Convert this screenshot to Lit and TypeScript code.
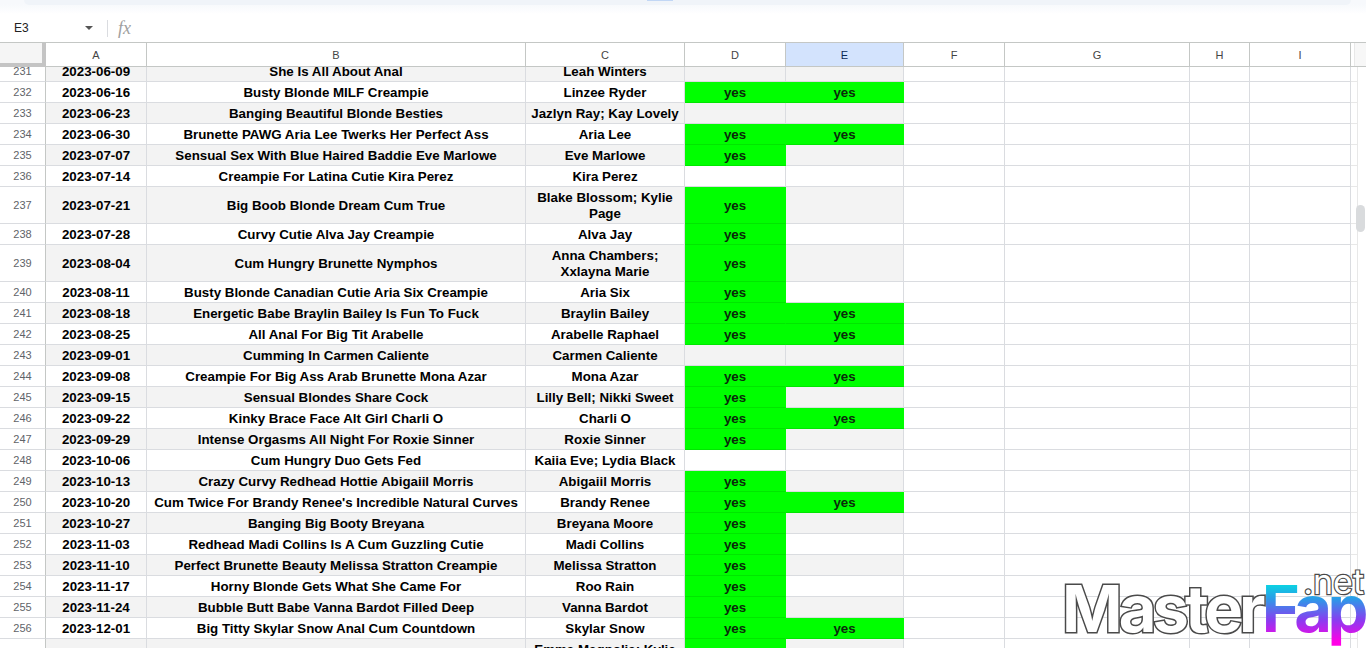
import { LitElement, html, css, nothing } from "lit";
import { customElement } from "lit/decorators.js";

type Row = { n: number; h?: number; a: string; b: string; c: string; d?: boolean; e?: boolean };
const rows: Row[] = [
  { n: 231, a: "2023-06-09", b: "She Is All About Anal", c: "Leah Winters" },
  { n: 232, a: "2023-06-16", b: "Busty Blonde MILF Creampie", c: "Linzee Ryder", d: true, e: true },
  { n: 233, a: "2023-06-23", b: "Banging Beautiful Blonde Besties", c: "Jazlyn Ray; Kay Lovely" },
  { n: 234, a: "2023-06-30", b: "Brunette PAWG Aria Lee Twerks Her Perfect Ass", c: "Aria Lee", d: true, e: true },
  { n: 235, a: "2023-07-07", b: "Sensual Sex With Blue Haired Baddie Eve Marlowe", c: "Eve Marlowe", d: true },
  { n: 236, a: "2023-07-14", b: "Creampie For Latina Cutie Kira Perez", c: "Kira Perez" },
  { n: 237, h: 37, a: "2023-07-21", b: "Big Boob Blonde Dream Cum True", c: "Blake Blossom; Kylie Page", d: true },
  { n: 238, a: "2023-07-28", b: "Curvy Cutie Alva Jay Creampie", c: "Alva Jay", d: true },
  { n: 239, h: 37, a: "2023-08-04", b: "Cum Hungry Brunette Nymphos", c: "Anna Chambers; Xxlayna Marie", d: true },
  { n: 240, a: "2023-08-11", b: "Busty Blonde Canadian Cutie Aria Six Creampie", c: "Aria Six", d: true },
  { n: 241, a: "2023-08-18", b: "Energetic Babe Braylin Bailey Is Fun To Fuck", c: "Braylin Bailey", d: true, e: true },
  { n: 242, a: "2023-08-25", b: "All Anal For Big Tit Arabelle", c: "Arabelle Raphael", d: true, e: true },
  { n: 243, a: "2023-09-01", b: "Cumming In Carmen Caliente", c: "Carmen Caliente" },
  { n: 244, a: "2023-09-08", b: "Creampie For Big Ass Arab Brunette Mona Azar", c: "Mona Azar", d: true, e: true },
  { n: 245, a: "2023-09-15", b: "Sensual Blondes Share Cock", c: "Lilly Bell; Nikki Sweet", d: true },
  { n: 246, a: "2023-09-22", b: "Kinky Brace Face Alt Girl Charli O", c: "Charli O", d: true, e: true },
  { n: 247, a: "2023-09-29", b: "Intense Orgasms All Night For Roxie Sinner", c: "Roxie Sinner", d: true },
  { n: 248, a: "2023-10-06", b: "Cum Hungry Duo Gets Fed", c: "Kaiia Eve; Lydia Black" },
  { n: 249, a: "2023-10-13", b: "Crazy Curvy Redhead Hottie Abigaiil Morris", c: "Abigaiil Morris", d: true },
  { n: 250, a: "2023-10-20", b: "Cum Twice For Brandy Renee's Incredible Natural Curves", c: "Brandy Renee", d: true, e: true },
  { n: 251, a: "2023-10-27", b: "Banging Big Booty Breyana", c: "Breyana Moore", d: true },
  { n: 252, a: "2023-11-03", b: "Redhead Madi Collins Is A Cum Guzzling Cutie", c: "Madi Collins", d: true },
  { n: 253, a: "2023-11-10", b: "Perfect Brunette Beauty Melissa Stratton Creampie", c: "Melissa Stratton", d: true },
  { n: 254, a: "2023-11-17", b: "Horny Blonde Gets What She Came For", c: "Roo Rain", d: true },
  { n: 255, a: "2023-11-24", b: "Bubble Butt Babe Vanna Bardot Filled Deep", c: "Vanna Bardot", d: true },
  { n: 256, a: "2023-12-01", b: "Big Titty Skylar Snow Anal Cum Countdown", c: "Skylar Snow", d: true, e: true },
  { n: 257, h: 37, a: "", b: "", c: "Emma Magnolia; Kylie Page", d: true },
];
const cols = ["A", "B", "C", "D", "E", "F", "G", "H", "I"];

@customElement("app-root")
export class AppRoot extends LitElement {
  static styles = css`
    :host {
      display: block;
      position: relative;
      width: 1366px;
      height: 648px;
      overflow: hidden;
      background: #fff;
      font-family: "Liberation Sans", Arial, sans-serif;
      color: #000;
    }
    .top { height: 14px; background: linear-gradient(180deg, #f7f9fc 30%, #fbfcfe 70%, #ffffff 100%); }
    .pill { height: 5px; margin: 0 15px 0 24px; background: #f0f4f9; border-radius: 0 0 8px 8px; display: flex; }
    .pill i { display: block; width: 26px; height: 1px; margin-left: 623px; background: #c2d7f5; }
    .fbar { height: 28px; display: flex; align-items: center; background: #fff; }
    .ref { width: 85px; padding-left: 14px; box-sizing: border-box; font-size: 12px; color: #222; }
    .caret { width: 0; height: 0; border-left: 4px solid transparent; border-right: 4px solid transparent; border-top: 4px solid #555; margin-right: 14px; }
    .sep { width: 1px; height: 17px; background: #dadce0; margin-right: 10px; }
    .fx { font-family: "Liberation Serif", serif; font-style: italic; font-size: 18px; color: #a0a0a0; }
    .grid-row { display: grid; grid-template-columns: 46px 101px 379px 159px 101px 118px 101px 185px 60px 101px 4px 11px; }
    .head { height: 25px; box-sizing: border-box; border-top: 1px solid #c4c7c5; border-bottom: 1px solid #c4c7c5; background: #fff; position: relative; z-index: 2; }
    .head > div { display: flex; align-items: center; justify-content: center; font-size: 11px; color: #444; border-right: 1px solid #c4c7c5; }
    .head .corner { background: #f5f5f5; border-right: 4px solid #c4c4c4; border-bottom: 4px solid #c4c4c4; margin-bottom: -1px; }
    .head .sel { background: #d3e3fd; color: #0b2a55; }
    .head .gap { border-right: 1px solid #e8e8e8; }
    .head .last { border-right: none; background: #f7f7f7; }
    .body { height: 582px; overflow: hidden; position: relative; }
    .rows { margin-top: -6px; }
    .r > div {
      box-sizing: border-box;
      display: flex;
      align-items: center;
      justify-content: center;
      text-align: center;
      border-right: 1px solid #dadce0;
      border-bottom: 1px solid #dadce0;
      font-size: 13.33px;
      line-height: 16px;
      font-weight: 700;
      padding: 2px 3px 0;
      min-width: 0;
    }
    .r > .num { font-weight: 400; font-size: 11px; color: #5f6368; background: #fff; padding: 0; border-right-color: #c4c7c5; }
    .r.alt > .shade { background: #f3f3f3; }
    .r > .yes { background: #00ff00; border-color: #00ff00; border-bottom-color: #00e600; color: #0a2a0a; }
    .r > .gap { border-right-color: #e8e8e8; border-bottom-color: #e8e8e8; }
    .r > .end { border: none; }
    .scroll { position: absolute; right: 1px; width: 9px; height: 27px; top: 138px; border-radius: 5px; background: #d9dbdd; z-index: 3; }
    .mark {
      position: absolute;
      left: 1062px;
      top: 565px;
      width: 310px;
      height: 83px;
      z-index: 4;
      font-family: Inter, "Liberation Sans", sans-serif;
      font-weight: 700;
      white-space: nowrap;
      pointer-events: none;
    }
    .word { position: absolute; left: 0; top: 5px; font-size: 65px; line-height: 78px; letter-spacing: -3.9px; }
    .word .m { color: #fff; -webkit-text-stroke: 3px #4a4a4a; paint-order: stroke fill; }
    .word .f {
      letter-spacing: -4.5px;
      padding-right: 6px;
      background: linear-gradient(180deg, #00e6e0 14%, #2c9ae8 38%, #8a3cf0 65%, #ff00e6 92%);
      -webkit-background-clip: text;
      background-clip: text;
      color: transparent;
    }
    .net { position: absolute; right: 8px; top: -3px; font-size: 34px; line-height: 40px; font-weight: 400; color: #fff; -webkit-text-stroke: 2.4px #4a4a4a; paint-order: stroke fill; }
  `;

  render() {
    return html`
      <div class="top"><div class="pill"><i></i></div></div>
      <div class="fbar">
        <div class="ref">E3</div>
        <div class="caret"></div>
        <div class="sep"></div>
        <div class="fx">fx</div>
      </div>
      <div class="grid-row head">
        <div class="corner"></div>
        ${cols.map((c) => html`<div class=${c === "E" ? "sel" : ""}>${c}</div>`)}
        <div class="gap"></div>
        <div class="last"></div>
      </div>
      <div class="body">
        <div class="rows">
          ${rows.map((r) => {
            const alt = r.n % 2 === 1;
            return html`<div class="grid-row r ${alt ? "alt" : ""}" style="height:${r.h ?? 21}px">
              <div class="num">${r.n}</div>
              <div class="shade">${r.a}</div>
              <div class="shade">${r.b}</div>
              <div class="shade">${r.c}</div>
              <div class=${r.d ? "yes" : "shade"}>${r.d ? "yes" : nothing}</div>
              <div class=${r.e ? "yes" : "shade"}>${r.e ? "yes" : nothing}</div>
              <div></div><div></div><div></div><div></div>
              <div class="gap"></div>
              <div class="end"></div>
            </div>`;
          })}
        </div>
        <div class="scroll"></div>
      </div>
      <div class="mark">
        <div class="net">.net</div>
        <div class="word"><span class="m">Master</span><span class="f">Fap</span></div>
      </div>
    `;
  }
}
